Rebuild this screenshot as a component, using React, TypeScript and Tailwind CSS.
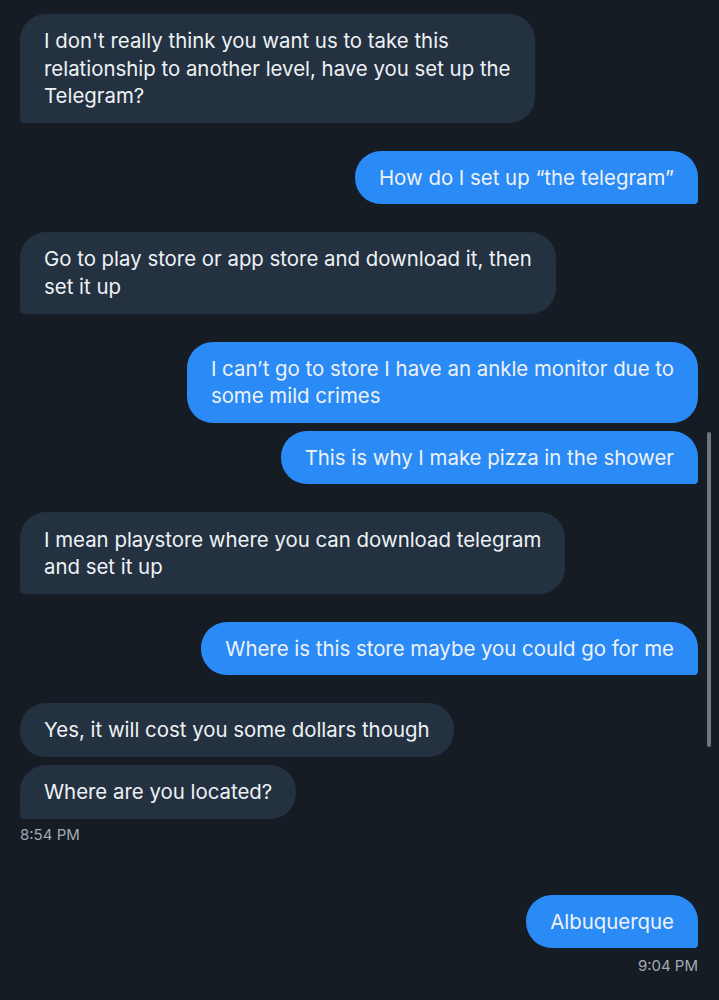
import React from "react";

type Msg = { side: "in" | "out"; lines: string[]; tail?: boolean; gap: number };

const msgs: Msg[] = [
  { side: "in", lines: ["I don't really think you want us to take this", "relationship to another level, have you set up the", "Telegram?"], tail: true, gap: 14 },
  { side: "out", lines: ["How do I set up \u201cthe telegram\u201d"], tail: true, gap: 28 },
  { side: "in", lines: ["Go to play store or app store and download it, then", "set it up"], tail: true, gap: 28 },
  { side: "out", lines: ["I can\u2019t go to store I have an ankle monitor due to", "some mild crimes"], tail: false, gap: 28 },
  { side: "out", lines: ["This is why I make pizza in the shower"], tail: true, gap: 8 },
  { side: "in", lines: ["I mean playstore where you can download telegram", "and set it up"], tail: true, gap: 28 },
  { side: "out", lines: ["Where is this store maybe you could go for me"], tail: true, gap: 28 },
  { side: "in", lines: ["Yes, it will cost you some dollars though"], tail: false, gap: 28 },
  { side: "in", lines: ["Where are you located?"], tail: true, gap: 8 },
];

function Bubble({ m }: { m: Msg }) {
  const isIn = m.side === "in";
  const base = "w-fit px-6 py-[13.1px] text-[20.4px] leading-[27.5px] text-[#eef2f6] rounded-[26px]";
  const color = isIn ? "bg-[#243140] self-start" : "bg-[#2a8af6] self-end";
  const tail = m.tail ? (isIn ? "rounded-bl-[4px]" : "rounded-br-[4px]") : "";
  return (
    <div className={`${base} ${color} ${tail}`} style={{ marginTop: m.gap }}>
      {m.lines.map((l, i) => (
        <div key={i} className="whitespace-nowrap">{l}</div>
      ))}
    </div>
  );
}

export default function App() {
  return (
    <div
      className="relative w-[719px] h-[1000px] bg-[#161c24] overflow-hidden"
      style={{ fontFamily: "Inter, 'Noto Sans', sans-serif" }}
    >
      <div className="flex flex-col pl-5 pr-[21px]">
        {msgs.map((m, i) => (
          <Bubble key={i} m={m} />
        ))}
        <div className="mt-[7px] text-[15px] leading-[18px] text-[#a3aab3] self-start">
          8:54 PM
        </div>
        <div className="mt-[51px] self-end w-fit px-6 py-[13.1px] text-[20.4px] leading-[27.5px] text-[#eef2f6] rounded-[26px] rounded-br-[4px] bg-[#2a8af6]">
          Albuquerque
        </div>
        <div className="mt-[9px] text-[15px] leading-[18px] text-[#a3aab3] self-end">
          9:04 PM
        </div>
      </div>
      <div className="absolute left-[707px] top-[432px] w-[4px] h-[315px] rounded-full bg-[#6e7680]" />
    </div>
  );
}
